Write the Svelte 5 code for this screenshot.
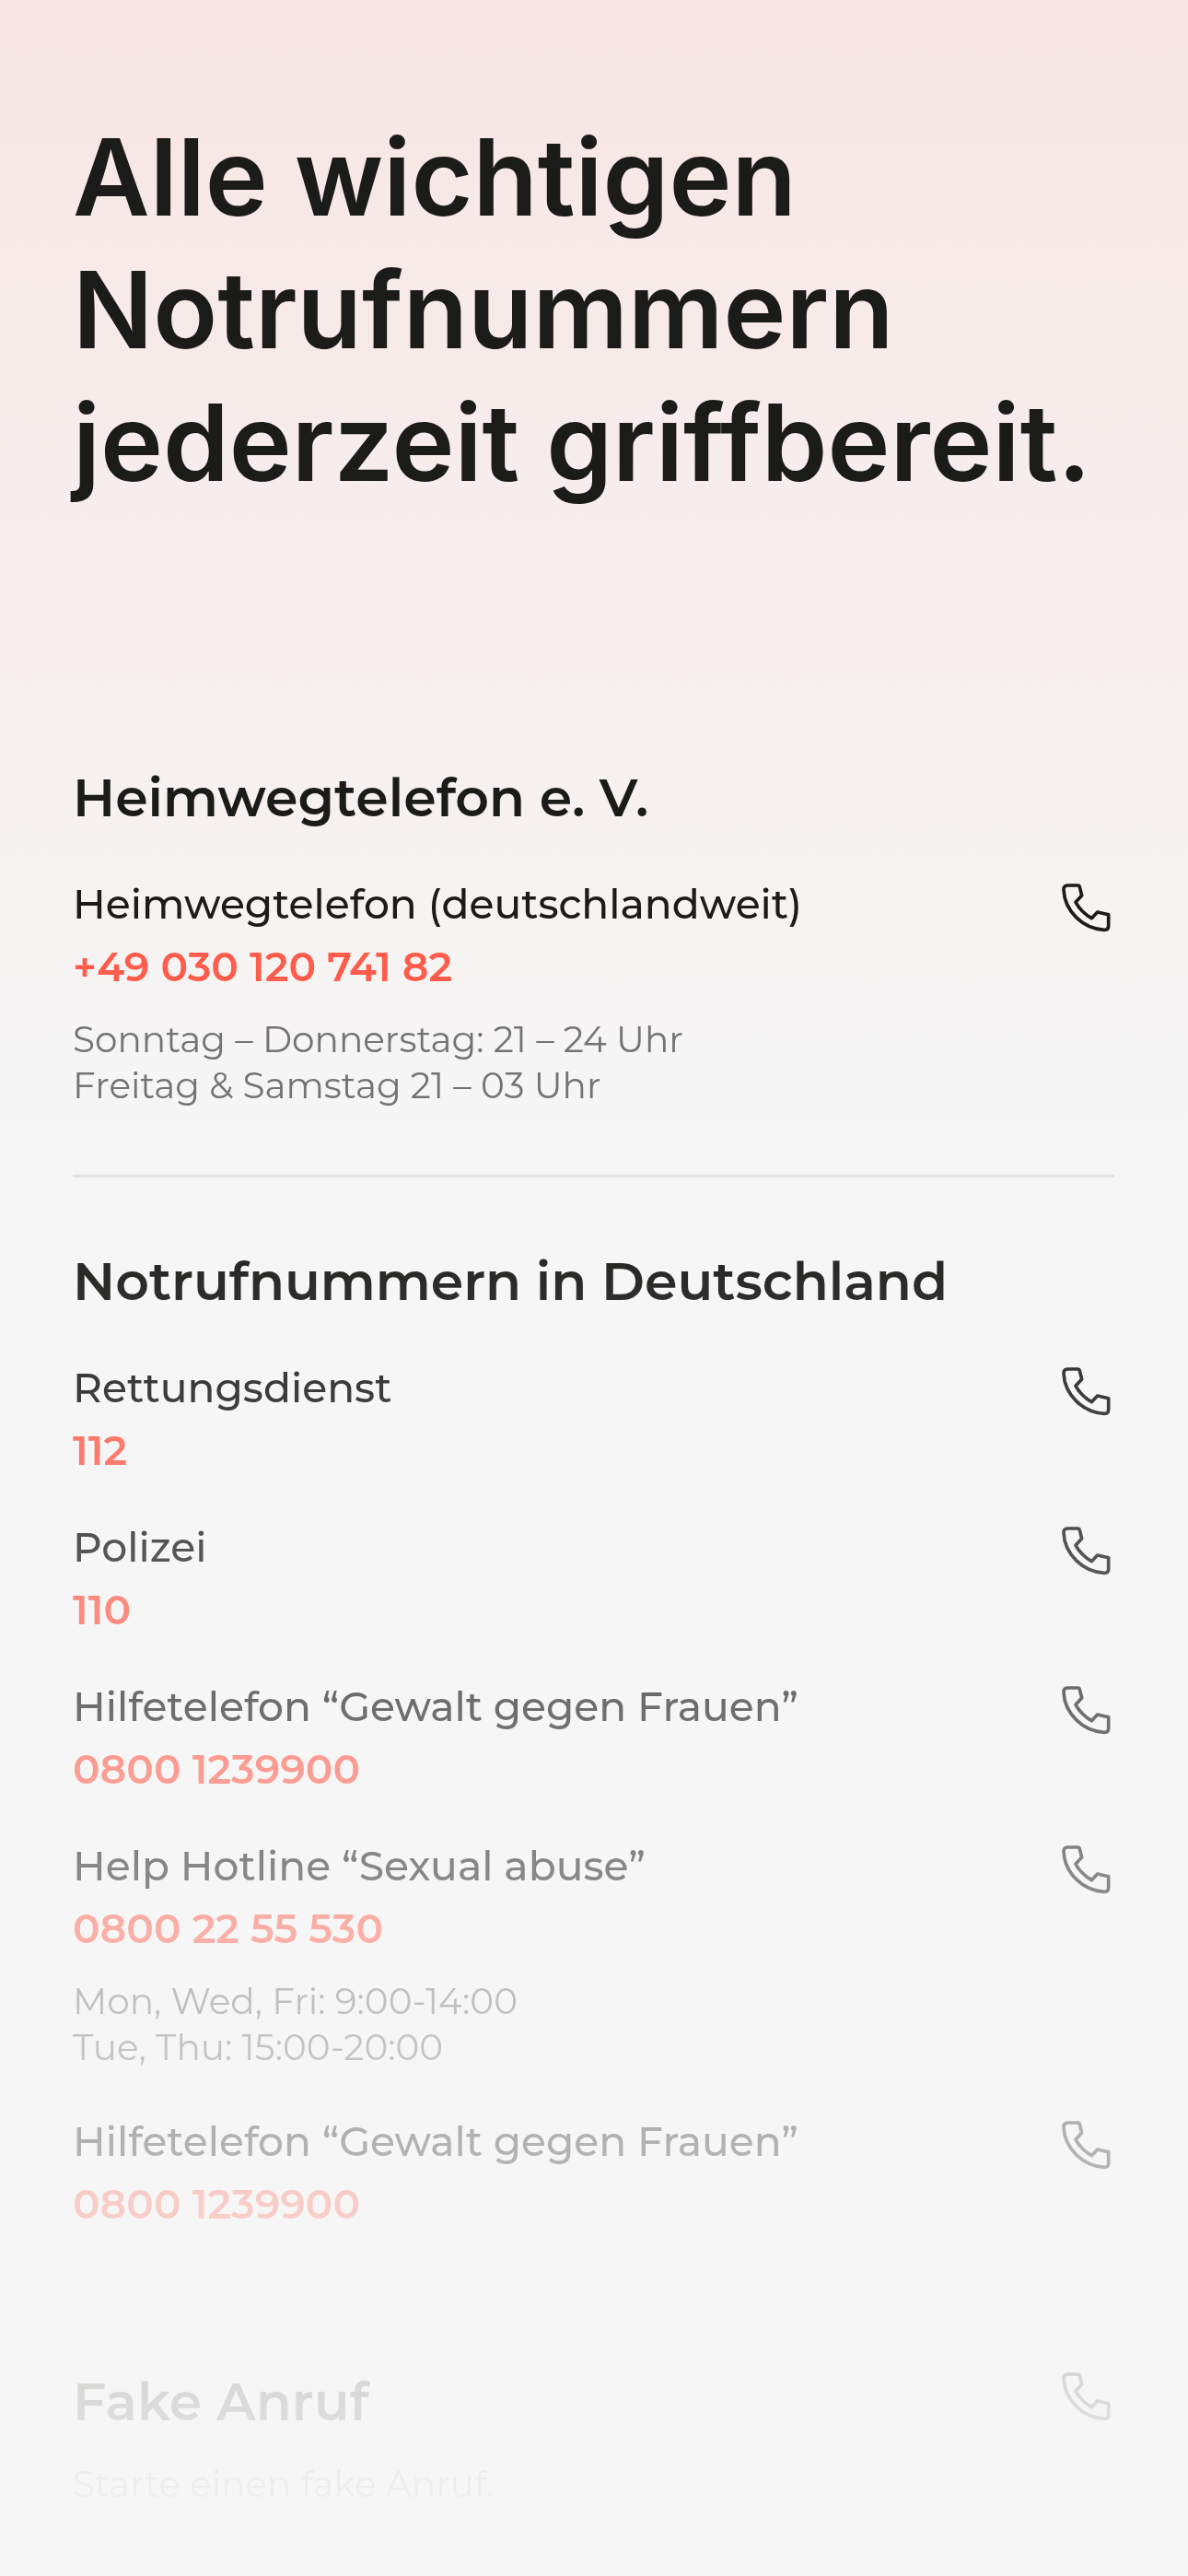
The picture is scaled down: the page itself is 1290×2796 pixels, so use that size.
<script lang="ts">
  type Contact = {
    name: string;
    number: string;
    hours?: string[];
  };

  type Group = {
    title: string;
    contacts: Contact[];
  };

  const groups: Group[] = [
    {
      title: 'Heimwegtelefon e. V.',
      contacts: [
        {
          name: 'Heimwegtelefon (deutschlandweit)',
          number: '+49 030 120 741 82',
          hours: ['Sonntag – Donnerstag: 21 – 24 Uhr', 'Freitag & Samstag 21 – 03 Uhr']
        }
      ]
    },
    {
      title: 'Notrufnummern in Deutschland',
      contacts: [
        { name: 'Rettungsdienst', number: '112' },
        { name: 'Polizei', number: '110' },
        { name: 'Hilfetelefon “Gewalt gegen Frauen”', number: '0800 1239900' },
        {
          name: 'Help Hotline “Sexual abuse”',
          number: '0800 22 55 530',
          hours: ['Mon, Wed, Fri: 9:00-14:00', 'Tue, Thu: 15:00-20:00']
        },
        { name: 'Hilfetelefon “Gewalt gegen Frauen”', number: '0800 1239900' }
      ]
    }
  ];

  function telHref(number: string) {
    return 'tel:' + number.replace(/\s/g, '');
  }
</script>

{#snippet phoneIcon()}
  <svg class="phone" viewBox="0 0 162 162" aria-hidden="true">
    <path
      d="M22 9H55Q60 9 61 14L68 42L48 64Q66 96 100 116L119 96L155 104V140Q155 154 141 154C72 150 12 94 9 23Q9 9 22 9Z"
    />
  </svg>
{/snippet}

<main>
  <h1>Alle wichtigen Notrufnummern jederzeit griffbereit.</h1>

  {#each groups as group}
    <section>
      <h2>{group.title}</h2>
      <ul>
        {#each group.contacts as contact}
          <li>
            <div class="info">
              <p class="name">{contact.name}</p>
              <a class="number" href={telHref(contact.number)}>{contact.number}</a>
              {#if contact.hours}
                <div class="hours">
                  {#each contact.hours as line}
                    <p>{line}</p>
                  {/each}
                </div>
              {/if}
            </div>
            <a class="call" href={telHref(contact.number)} aria-label={contact.name}>
              {@render phoneIcon()}
            </a>
          </li>
        {/each}
      </ul>
    </section>
  {/each}

  <section class="fake">
    <div class="info">
      <h2>Fake Anruf</h2>
      <p class="hint">Starte einen fake Anruf.</p>
    </div>
    <button class="call" type="button" aria-label="Fake Anruf">
      {@render phoneIcon()}
    </button>
  </section>
</main>

<style>
  :global(body) {
    background: #f6f6f6 linear-gradient(to bottom, #f7e6e4 0, #f6f6f6 1240px) no-repeat;
  }

  main {
    box-sizing: border-box;
    min-height: 100vh;
    padding: 121px 80px 60px 79px;
    font-family: Montserrat, Inter, sans-serif;
    color: #1b1b19;
    /* content fades out towards the bottom of the page */
    -webkit-mask-image: linear-gradient(to bottom, #000 46%, transparent 100%);
    mask-image: linear-gradient(to bottom, #000 46%, transparent 100%);
  }

  h1,
  h2,
  p,
  ul {
    margin: 0;
    padding: 0;
  }

  h1 {
    margin-bottom: 277px;
    font-family: Inter, sans-serif;
    font-size: 115px;
    font-weight: 600;
    line-height: 144px;
  }

  h2 {
    font-size: 57px;
    font-weight: 600;
    line-height: 72px;
  }

  ul {
    display: flex;
    flex-direction: column;
    gap: 41px;
    margin-top: 47px;
    list-style: none;
  }

  li,
  .fake {
    display: flex;
    justify-content: space-between;
    align-items: flex-start;
  }

  section + section {
    margin-top: 72px;
    padding-top: 77px;
    border-top: 3px solid #e0e0e0;
  }

  .info {
    display: flex;
    flex-direction: column;
    align-items: flex-start;
    gap: 4px;
  }

  .name,
  .number {
    font-size: 44px;
    line-height: 64px;
  }

  .name {
    font-weight: 500;
  }

  .number {
    font-weight: 600;
    color: #ff5c4b;
    text-decoration: none;
  }

  .hours,
  .hint {
    font-size: 39px;
    font-weight: 400;
    line-height: 50px;
    color: #737371;
  }

  .hours {
    margin-top: 18px;
  }

  li:not(:last-child) .hours {
    margin-bottom: 4px;
  }

  .call {
    flex: none;
    margin: 9px 4px 0 0;
    padding: 0;
    border: 0;
    background: none;
    color: inherit;
    cursor: pointer;
  }

  .phone {
    display: block;
    width: 54px;
    height: 54px;
    fill: none;
    stroke: currentColor;
    stroke-width: 11;
    stroke-linejoin: round;
  }

  section.fake {
    margin-top: 147px;
    padding-top: 0;
    border-top: 0;
  }

  .fake .call {
    margin-top: 3px;
  }

  .hint {
    margin-top: 24px;
  }
</style>
